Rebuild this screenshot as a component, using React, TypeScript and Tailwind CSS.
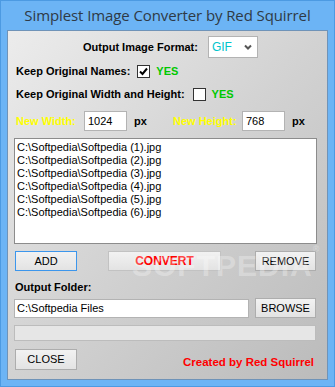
import React from 'react';

const files = [1, 2, 3, 4, 5, 6].map((n) => `C:\\Softpedia\\Softpedia (${n}).jpg`);

const Box = ({ checked }: { checked?: boolean }) => (
  <div className="w-[13px] h-[13px] bg-white border border-[#333333] flex items-center justify-center">
    {checked && (
      <svg width="9" height="9" viewBox="0 0 9 9">
        <path d="M1 4.5 L3.5 7 L8 1.5" fill="none" stroke="#000" strokeWidth="2" />
      </svg>
    )}
  </div>
);

const Button = ({ children, className = '' }: { children: React.ReactNode; className?: string }) => (
  <div
    className={`h-[20px] flex items-center justify-center border bg-gradient-to-b from-[#f2f2f2] to-[#e3e3e3] text-[11px] text-black ${className}`}
  >
    {children}
  </div>
);

export default function App() {
  return (
    <div className="w-[335px] h-[387px] bg-[#6cb4f5] border border-[#4c9ae2] flex flex-col font-['Liberation_Sans',Arial,sans-serif]">
      <div className="h-[29px] flex items-center justify-center text-[15px] text-[#2f3a45] font-['Open_Sans',sans-serif] tracking-[-0.1px]">
        Simplest Image Converter by Red Squirrel
      </div>

      <div className="relative mx-[6px] h-[350px] border border-[#6f93b8] bg-gradient-to-br from-[#ececec] via-[#d2d2d2] to-[#bbbbbb] flex flex-col">
        {/* format */}
        <div className="mt-[5px] h-[22px] flex items-center pl-[75px]">
          <span className="text-[11px] font-bold text-black">Output Image Format:</span>
          <div className="ml-[10px] w-[50px] h-[22px] bg-white border border-[#b3b3b3] flex items-center justify-between pl-[3px] pr-[5px]">
            <span className="text-[12px] text-[#00c4cc]">GIF</span>
            <svg width="8" height="6" viewBox="0 0 8 6">
              <path d="M1 1.5 L4 4.5 L7 1.5" fill="none" stroke="#555" strokeWidth="2" />
            </svg>
          </div>
        </div>

        {/* keep names */}
        <div className="mt-[6px] h-[15px] flex items-center pl-[8px]">
          <span className="text-[11px] font-bold text-black">Keep Original Names:</span>
          <div className="ml-[7px]">
            <Box checked />
          </div>
          <span className="ml-[6px] text-[11px] font-bold text-[#00c800]">YES</span>
        </div>

        {/* keep size */}
        <div className="mt-[8px] h-[15px] flex items-center pl-[8px]">
          <span className="text-[11px] font-bold text-black">Keep Original Width and Height:</span>
          <div className="ml-[8px]">
            <Box />
          </div>
          <span className="ml-[6px] text-[11px] font-bold text-[#00c800]">YES</span>
        </div>

        {/* size */}
        <div className="mt-[9px] h-[20px] flex items-center pl-[8px]">
          <span className="w-[68px] text-[11px] font-bold text-[#ffff00]">New Width:</span>
          <div className="w-[43px] h-[20px] bg-white border border-[#b3b3b3] flex items-center pl-[3px] text-[11px] text-black">
            1024
          </div>
          <span className="ml-[7px] w-[39px] text-[11px] font-bold text-black">px</span>
          <span className="w-[69px] text-[11px] font-bold text-[#ffff00]">New Height:</span>
          <div className="w-[43px] h-[20px] bg-white border border-[#b3b3b3] flex items-center pl-[3px] text-[11px] text-black">
            768
          </div>
          <span className="ml-[7px] text-[11px] font-bold text-black">px</span>
        </div>

        {/* list */}
        <div className="mt-[7px] ml-[6px] w-[303px] h-[106px] bg-white border border-[#8c8c8c] pt-[2px] pl-[2px]">
          {files.map((f) => (
            <div key={f} className="h-[13px] leading-[13px] text-[11px] text-black">
              {f}
            </div>
          ))}
        </div>

        {/* actions */}
        <div className="mt-[7px] flex items-center pl-[7px]">
          <Button className="w-[62px] border-[#3c96ec]">ADD</Button>
          <Button className="ml-[31px] w-[113px] border-[#c2c2c2]">
            <span className="text-[12px] font-bold text-[#ff0000]">CONVERT</span>
          </Button>
          <Button className="ml-[34px] w-[61px] border-[#adadad]">REMOVE</Button>
        </div>

        <div className="mt-[10px] pl-[7px] text-[11px] font-bold text-black leading-[12px]">Output Folder:</div>

        <div className="mt-[5px] flex items-center pl-[6px]">
          <div className="w-[235px] h-[19px] bg-white border border-[#b3b3b3] flex items-center pl-[2px] text-[11px] text-black">
            C:\Softpedia Files
          </div>
          <Button className="ml-[6px] w-[61px] h-[17px] border-[#adadad]">BROWSE</Button>
        </div>

        <div className="mt-[7px] ml-[6px] w-[302px] h-[16px] bg-[#e6e6e6] border border-[#bcbcbc]" />

        <div className="mt-[8px] flex items-end pl-[7px]">
          <Button className="w-[62px] h-[21px] border-[#adadad]">CLOSE</Button>
          <span className="ml-[106px] mb-[-1px] text-[11.5px] font-bold text-[#ff0000]">Created by Red Squirrel</span>
        </div>

        {/* watermark */}
        <div className="absolute left-[124px] top-[212px] text-[30px] font-bold tracking-[1px] text-white/30 pointer-events-none select-none">
          SOFTPEDIA<span className="text-[9px] align-top">®</span>
        </div>
      </div>
    </div>
  );
}
